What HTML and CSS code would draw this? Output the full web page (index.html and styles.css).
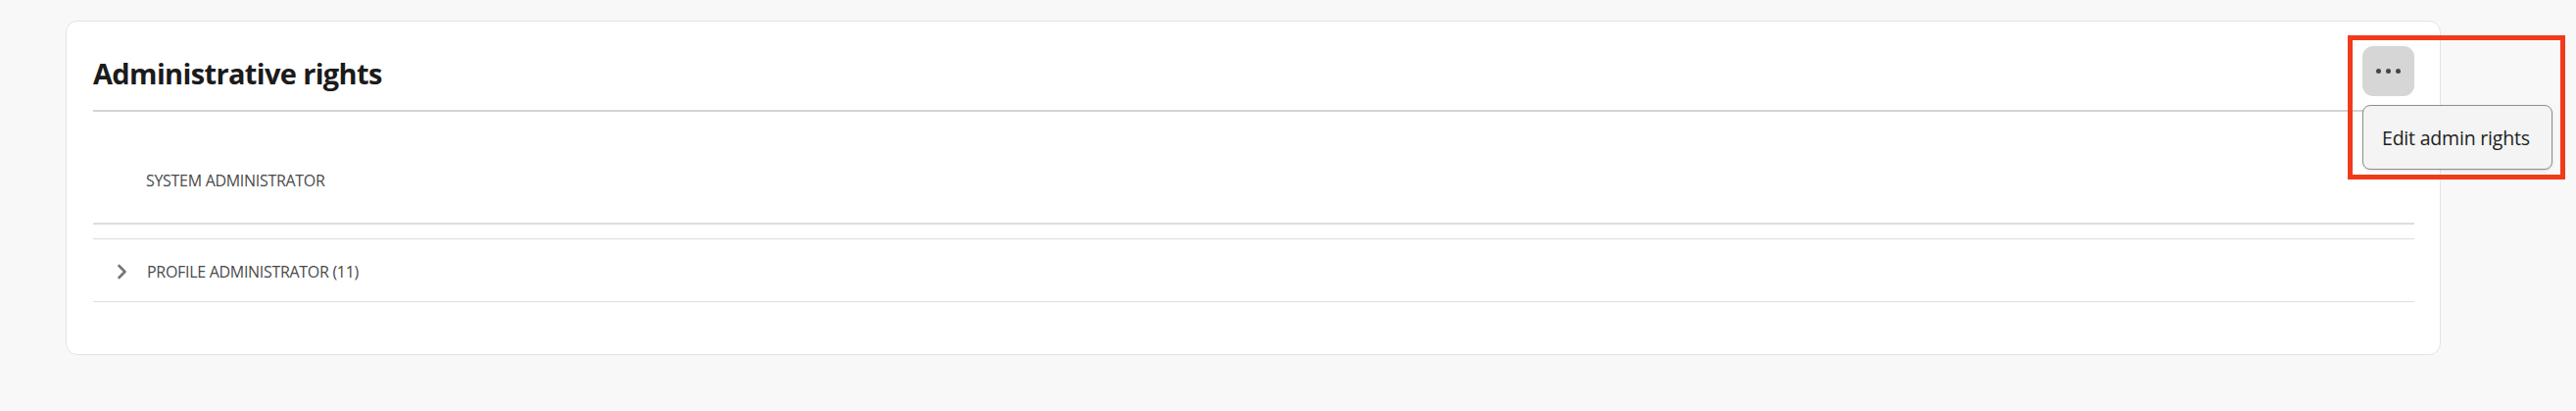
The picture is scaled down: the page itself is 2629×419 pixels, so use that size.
FILE: index.html
```html
<!DOCTYPE html>
<html lang="en">
<head>
<meta charset="utf-8">
<title>Administrative rights</title>
<link rel="stylesheet" href="styles.css">
</head>
<body>
<div class="page">
  <section class="card">
    <header class="card-header">
      <h2 class="title">Administrative rights</h2>
      <div class="actions">
        <button class="more-btn" aria-label="More actions">
          <span class="dot"></span><span class="dot"></span><span class="dot"></span>
        </button>
        <div class="menu">
          <div class="menu-item">Edit admin rights</div>
        </div>
        <div class="highlight"></div>
      </div>
    </header>
    <div class="rows">
      <div class="row row-static">
        <span class="row-label">SYSTEM ADMINISTRATOR</span>
      </div>
      <div class="row row-expand">
        <svg class="chevron" width="12" height="16" viewBox="0 0 12 16"><path d="M2.5 2 L8.5 8 L2.5 14" fill="none" stroke="#767676" stroke-width="2.6" stroke-linecap="round" stroke-linejoin="round"/></svg>
        <span class="row-label">PROFILE ADMINISTRATOR (11)</span>
      </div>
    </div>
  </section>
</div>
</body>
</html>
```
FILE: styles.css
```css
html, body {
  margin: 0;
  padding: 0;
  background: #f8f8f8;
}
body {
  font-family: "Open Sans", "Liberation Sans", sans-serif;
  color: #2c2c2c;
}
.page {
  padding: 21px 0 0 67px;
}
.card {
  box-sizing: border-box;
  width: 2424px;
  height: 341px;
  background: #ffffff;
  border: 1.5px solid #e4e4e4;
  border-radius: 12px;
  padding: 25px 26px 0 27px;
}
.card-header {
  display: flex;
  align-items: center;
  justify-content: space-between;
  height: 51px;
  padding-bottom: 14px;
  border-bottom: 2.5px solid #d4d4d4;
}
.title {
  margin: 0;
  font-family: "Open Sans", sans-serif;
  font-weight: 700;
  font-size: 29px;
  letter-spacing: -0.65px;
  color: #1b1b1b;
  line-height: 1;
  padding-top: 4px;
}
.actions {
  position: relative;
  width: 53px;
  height: 51px;
}
.more-btn {
  width: 53px;
  height: 51px;
  border: none;
  border-radius: 11px;
  background: #d6d6d6;
  display: flex;
  align-items: center;
  justify-content: center;
  gap: 5px;
  padding: 0;
}
.dot {
  width: 5px;
  height: 5px;
  border-radius: 50%;
  background: #464646;
}
.menu {
  position: absolute;
  top: 60px;
  left: 0;
  width: 194px;
  height: 66px;
  box-sizing: border-box;
  background: #f4f4f4;
  border: 1.5px solid #8e8e8e;
  border-radius: 8px;
  box-shadow: 0 1px 3px rgba(0,0,0,0.12);
  display: flex;
  align-items: center;
  z-index: 2;
}
.menu-item {
  padding-left: 19px;
  font-size: 19.5px;
  color: #222;
  letter-spacing: -0.2px;
}
.highlight {
  position: absolute;
  left: -15px;
  top: -11px;
  width: 222px;
  height: 147px;
  box-sizing: border-box;
  border: 5px solid #f23a1b;
  z-index: 3;
  pointer-events: none;
}
.rows {
  display: flex;
  flex-direction: column;
}
.row {
  display: flex;
  align-items: center;
}
.row-static {
  height: 115px;
  padding-left: 54px;
  padding-top: 26px;
  border-bottom: 2px solid #dddddd;
  box-sizing: border-box;
}
.row-expand {
  margin-top: 14px;
  height: 65px;
  box-sizing: border-box;
  border-top: 1.5px solid #dedede;
  border-bottom: 1.5px solid #dedede;
  padding-left: 24px;
  padding-top: 3px;
  gap: 19px;
}
.chevron {
  display: block;
}
.row-label {
  font-size: 16px;
  color: #4a4a4a;
  letter-spacing: -0.3px;
}
```
